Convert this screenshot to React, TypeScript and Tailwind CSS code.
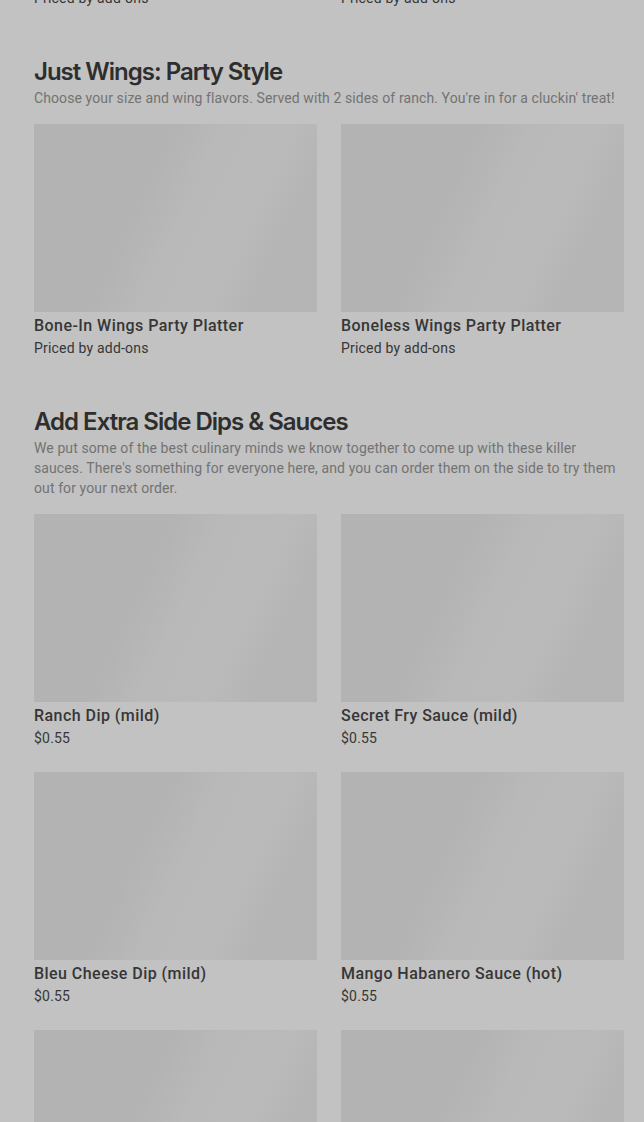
const sections = [
  {
    title: "Just Wings: Party Style",
    desc: "Choose your size and wing flavors. Served with 2 sides of ranch. You're in for a cluckin' treat!",
    items: [
      { name: "Bone-In Wings Party Platter", price: "Priced by add-ons" },
      { name: "Boneless Wings Party Platter", price: "Priced by add-ons" },
    ],
  },
  {
    title: "Add Extra Side Dips & Sauces",
    desc: "We put some of the best culinary minds we know together to come up with these killer sauces. There's something for everyone here, and you can order them on the side to try them out for your next order.",
    items: [
      { name: "Ranch Dip (mild)", price: "$0.55" },
      { name: "Secret Fry Sauce (mild)", price: "$0.55" },
      { name: "Bleu Cheese Dip (mild)", price: "$0.55" },
      { name: "Mango Habanero Sauce (hot)", price: "$0.55" },
      { name: "Buffalo Sauce (hot)", price: "$0.55" },
      { name: "Garlic Parmesan Sauce (mild)", price: "$0.55" },
    ],
  },
];

const ItemCard = ({ name, price }: { name: string; price: string }) => {
  return (
    <div className="flex flex-col">
      <div className="h-[188px] w-full bg-[linear-gradient(115deg,#b3b3b3_38%,#b9b9b9_52%,#bababa_70%,#b5b5b5_82%)]" />
      <p className="mt-[2px] text-[16px] leading-6 font-medium tracking-[0.45px] text-[#363636]">{name}</p>
      <p className="text-[14px] leading-5 tracking-[0.2px] text-[#363636]">{price}</p>
    </div>
  );
};

export default function App() {
  return (
    <div
      className="min-h-screen bg-[#c2c2c2] pl-[34px] pr-[20px] overflow-hidden"
      style={{ fontFamily: "Roboto, 'Liberation Sans', sans-serif" }}
    >
      {/* tail of the previous section */}
      <div className="grid grid-cols-2 gap-x-6 -mt-3">
        <p className="text-[14px] leading-5 tracking-[0.2px] text-[#363636]">Priced by add-ons</p>
        <p className="text-[14px] leading-5 tracking-[0.2px] text-[#363636]">Priced by add-ons</p>
      </div>

      {sections.map((section) => (
        <section key={section.title} className="mt-[48px]">
          <h2
            className="text-[24px] leading-8 font-semibold tracking-[-1px] text-[#2e2e2e]"
            style={{ fontFamily: "Inter, Roboto, sans-serif" }}
          >
            {section.title}
          </h2>
          <p className="text-[14px] leading-5 tracking-[0.1px] text-[#737373]">{section.desc}</p>
          <div className="mt-4 grid grid-cols-2 gap-x-6 gap-y-6">
            {section.items.map((item) => (
              <ItemCard key={item.name} name={item.name} price={item.price} />
            ))}
          </div>
        </section>
      ))}
    </div>
  );
}
